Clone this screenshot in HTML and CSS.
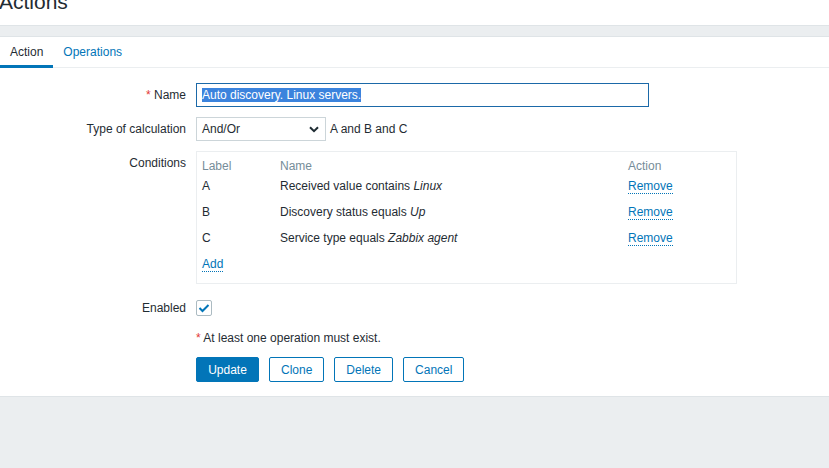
FILE: index.html
```html
<!DOCTYPE html>
<html>
<head>
<meta charset="utf-8">
<link rel="stylesheet" href="styles.css">
</head>
<body>
<header class="page-header">
  <h1 class="page-title">Actions</h1>
</header>
<div class="band"></div>
<main class="panel">
  <nav class="tabs">
    <a class="tab active">Action</a>
    <a class="tab">Operations</a>
  </nav>
  <form class="form">
    <div class="row row-name">
      <label class="lbl"><span class="req">*</span> Name</label>
      <div class="field">
        <div class="input input-focus"><span class="sel">Auto discovery. Linux servers.</span></div>
      </div>
    </div>
    <div class="row row-type">
      <label class="lbl">Type of calculation</label>
      <div class="field inline">
        <div class="select">
          <span>And/Or</span>
          <svg class="chev" width="10" height="7" viewBox="0 0 10 7"><path d="M1 1.2 L5 5.2 L9 1.2" fill="none" stroke="#1f2c33" stroke-width="2"/></svg>
        </div>
        <span class="expr">A and B and C</span>
      </div>
    </div>
    <div class="row row-cond">
      <label class="lbl lbl-top">Conditions</label>
      <div class="field">
        <div class="cond-box">
          <div class="cond-grid head">
            <span>Label</span><span>Name</span><span>Action</span>
          </div>
          <div class="cond-grid line">
            <span>A</span><span>Received value contains <i>Linux</i></span><span><a class="link">Remove</a></span>
          </div>
          <div class="cond-grid line">
            <span>B</span><span>Discovery status equals <i>Up</i></span><span><a class="link">Remove</a></span>
          </div>
          <div class="cond-grid line">
            <span>C</span><span>Service type equals <i>Zabbix agent</i></span><span><a class="link">Remove</a></span>
          </div>
          <div class="cond-grid line">
            <span><a class="link">Add</a></span>
          </div>
        </div>
      </div>
    </div>
    <div class="row row-enabled">
      <label class="lbl">Enabled</label>
      <div class="field">
        <span class="checkbox">
          <svg width="12" height="10" viewBox="0 0 12 10"><path d="M1.5 5 L4.5 8 L10.5 2" fill="none" stroke="#0275b8" stroke-width="2"/></svg>
        </span>
      </div>
    </div>
    <div class="row row-msg">
      <span></span>
      <div class="field msg"><span class="req">*</span> At least one operation must exist.</div>
    </div>
    <div class="row row-btns">
      <span></span>
      <div class="field buttons">
        <button type="button" class="btn primary">Update</button>
        <button type="button" class="btn">Clone</button>
        <button type="button" class="btn">Delete</button>
        <button type="button" class="btn">Cancel</button>
      </div>
    </div>
  </form>
</main>
</body>
</html>
```
FILE: styles.css
```css
* { box-sizing: border-box; }
html, body { margin: 0; padding: 0; }
body {
  background: #ebeef0;
  font-family: "Liberation Sans", Arial, sans-serif;
  font-size: 12px;
  color: #1f2c33;
  height: 468px;
  overflow: hidden;
}
.page-header {
  background: #fff;
  height: 26px;
  border-bottom: 1px solid #dfe4e7;
  overflow: hidden;
}
.page-title {
  margin: -10px 0 0 -1px;
  font-size: 21px;
  line-height: 24px;
  font-weight: normal;
  color: #1f2c33;
}
.band {
  height: 11px;
  background: #ebeef0;
  border-bottom: 1px solid #dfe4e7;
}
.panel {
  background: #fff;
  height: 360px;
  border-bottom: 1px solid #dfe4e7;
}
.tabs {
  display: flex;
  height: 31px;
  border-bottom: 1px solid #ebeef0;
}
.tab {
  display: block;
  height: 31px;
  padding: 1px 10px 0;
  line-height: 28px;
  color: #0275b8;
  border-bottom: 3px solid transparent;
}
.tab.active {
  color: #1f2c33;
  border-bottom-color: #0275b8;
}
.form {
  display: flex;
  flex-direction: column;
  padding-top: 15px;
}
.row {
  display: grid;
  grid-template-columns: 186px 1fr;
  column-gap: 10px;
  align-items: center;
}
.lbl {
  text-align: right;
  line-height: 14px;
}
.lbl-top { align-self: start; padding-top: 5px; }
.req { color: #e33734; }
.row-type { margin-top: 10px; }
.row-cond { margin-top: 10px; }
.row-enabled { margin-top: 16px; }
.row-msg { margin-top: 15px; }
.row-btns { margin-top: 12px; }
.input {
  width: 453px;
  height: 24px;
  border: 1px solid #ccd5d9;
  padding: 0 5px;
  line-height: 22px;
  white-space: nowrap;
}
.input-focus { border-color: #1b69a8; }
.sel {
  background: #3b83dd;
  color: #fff;
}
.inline {
  display: flex;
  align-items: center;
  gap: 4px;
}
.select {
  width: 130px;
  height: 24px;
  border: 1px solid #ccd5d9;
  padding: 0 5px;
  display: flex;
  align-items: center;
  justify-content: space-between;
}
.chev { margin-right: 1px; }
.cond-box {
  width: 541px;
  height: 133px;
  border: 1px solid #ebeef0;
  padding: 6px 5px 0 5px;
}
.cond-grid {
  display: grid;
  grid-template-columns: 78px 348px auto;
  align-items: center;
}
.cond-grid.head {
  height: 15px;
  color: #768d99;
  line-height: 14px;
}
.cond-grid.line { height: 26px; }
.link {
  color: #0275b8;
  border-bottom: 1px dotted #0275b8;
  cursor: pointer;
}
.checkbox {
  display: flex;
  align-items: center;
  justify-content: center;
  width: 16px;
  height: 16px;
  border: 1px solid #acbbc2;
  border-radius: 2px;
}
.msg { line-height: 14px; }
.buttons {
  display: flex;
  gap: 10px;
}
.btn {
  height: 25px;
  padding: 0 11px;
  font-family: "Liberation Sans", Arial, sans-serif;
  font-size: 12px;
  background: #fff;
  color: #0275b8;
  border: 1px solid #0275b8;
  border-radius: 2px;
}
.btn.primary {
  background: #0275b8;
  color: #fff;
  width: 63px;
}
```
